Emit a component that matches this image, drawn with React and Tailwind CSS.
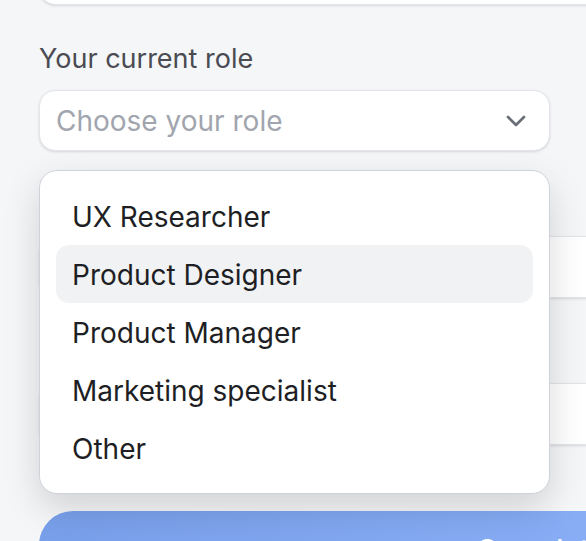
import React from 'react'
import { ChevronDown } from 'lucide-react'

const roles = ['UX Researcher', 'Product Designer', 'Product Manager', 'Marketing specialist', 'Other']

// labels of the fields hidden behind the open menu
function Field({ label, children }) {
  return (
    <div className="flex flex-col">
      {label ? (
        <label className="text-[27px] leading-[32px] text-[#4a4b53] mt-[38px] mb-[15px]">{label}</label>
      ) : (
        <div className="h-[32px] mt-[38px] mb-[15px]"></div>
      )}
      {children}
    </div>
  )
}

export default function App() {
  return (
    <div className="h-[541px] w-[586px] overflow-hidden bg-[#f5f6f8] font-['Inter',sans-serif]">
      <div className="ml-[39px] -mt-[57px] w-[1004px] flex flex-col">
        <div className="h-[62px] rounded-2xl border-[1.5px] border-[#e3e5ea] bg-white shadow-sm"></div>

        <Field label="Your current role">
          <div className="relative w-[511px]">
            <div className="h-[61px] flex items-center justify-between pl-[16px] pr-[17px] rounded-2xl border-[1.5px] border-[#e3e5ea] bg-white shadow-sm">
              <span className="text-[28px] text-[#a1a5ae]">Choose your role</span>
              <ChevronDown size={32} strokeWidth={2} className="text-[#6b6f78]" />
            </div>

            <div className="absolute left-0 top-[80px] z-10 w-[511px] rounded-[18px] border-[1.5px] border-[#cfd3d9] bg-white p-[16px] shadow-[0_14px_36px_rgba(0,0,0,0.15)]">
              {roles.map((r) => (
                <div
                  key={r}
                  className={
                    'h-[58px] flex items-center px-[16px] pt-[2px] rounded-[13px] text-[28px] text-[#1e1f24] ' +
                    (r === 'Product Designer' ? 'bg-[#f1f2f4]' : '')
                  }
                >
                  {r}
                </div>
              ))}
            </div>
          </div>
        </Field>

        <Field>
          <div className="h-[62px] rounded-2xl border-[1.5px] border-[#e3e5ea] bg-white shadow-sm"></div>
        </Field>

        <Field>
          <div className="h-[62px] rounded-2xl border-[1.5px] border-[#e3e5ea] bg-white shadow-sm"></div>
        </Field>

        <button className="mt-[66px] h-[72px] rounded-[34px] bg-gradient-to-r from-[#789fea] to-[#95b9ff] text-white text-[28px] font-medium">
          <span className="relative top-[3px]">Complete</span>
        </button>
      </div>
    </div>
  )
}
